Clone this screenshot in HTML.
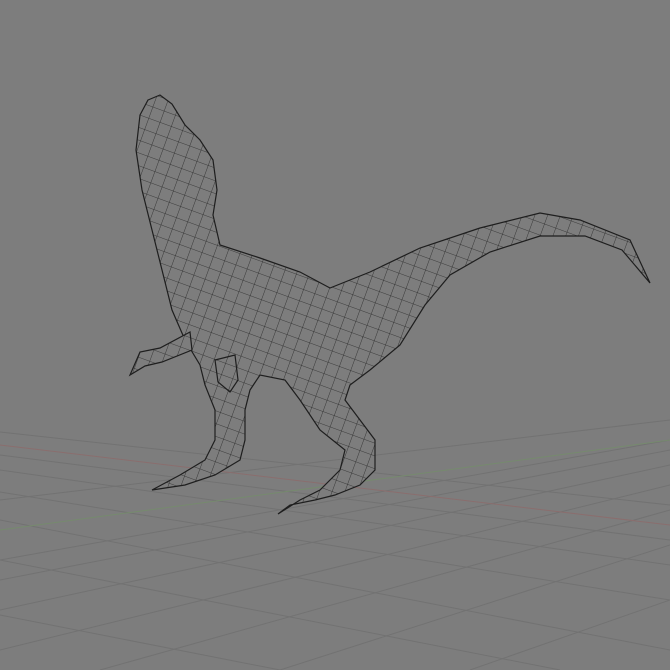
<!DOCTYPE html>
<html><head><style>
html,body{margin:0;padding:0;background:#7d7d7d;width:670px;height:670px;overflow:hidden}
</style></head><body>
<svg width="670" height="670" viewBox="0 0 670 670" xmlns="http://www.w3.org/2000/svg">
<defs>
<pattern id="mesh" width="12" height="12" patternUnits="userSpaceOnUse" patternTransform="rotate(20)">
<rect width="12" height="12" fill="#7d7d7d"/>
<path d="M0 0H12M0 0V12" stroke="#262626" stroke-width="0.8"/>
</pattern>
</defs>
<rect width="670" height="670" fill="#7d7d7d"/>
<g stroke="#727272" stroke-width="1" fill="none">
<line x1="0" y1="455" x2="670" y2="540"/>
<line x1="0" y1="470" x2="670" y2="565"/>
<line x1="0" y1="492" x2="670" y2="600"/>
<line x1="0" y1="520" x2="670" y2="650"/>
<line x1="0" y1="560" x2="560" y2="670"/>
<line x1="0" y1="615" x2="280" y2="670"/>
<line x1="0" y1="432" x2="670" y2="505"/>
<line x1="0" y1="560" x2="670" y2="440"/>
<line x1="0" y1="580" x2="670" y2="450"/>
<line x1="0" y1="610" x2="670" y2="465"/>
<line x1="0" y1="650" x2="670" y2="485"/>
<line x1="100" y1="670" x2="670" y2="510"/>
<line x1="280" y1="670" x2="670" y2="545"/>
<line x1="470" y1="670" x2="670" y2="600"/>
<line x1="0" y1="500" x2="670" y2="420"/>
</g>
<line x1="0" y1="445" x2="670" y2="525" stroke="#8a6e6e" stroke-width="1"/>
<line x1="0" y1="530" x2="670" y2="440" stroke="#768a6e" stroke-width="1"/>
<g fill="url(#mesh)" stroke="#1e1e1e" stroke-width="1.2">
<polygon points="148,100 160,95 172,104 185,125 200,140 213,160 217,190 213,215 220,245 260,258 300,272 330,288 370,272 420,248 480,228 540,213 580,220 630,240 650,283 622,250 585,236 540,236 490,252 450,275 425,305 400,345 370,370 350,385 345,400 360,420 375,440 375,470 360,485 335,495 315,500 290,505 278,514 300,500 320,490 340,470 345,450 320,430 300,400 285,380 260,375 250,390 245,410 245,440 240,460 215,475 185,485 152,490 180,475 205,460 215,440 215,410 205,385 200,365 185,340 172,310 162,270 152,230 142,190 136,150 140,115"/>
<polygon points="190,332 160,348 140,352 130,375 145,366 162,362 192,350"/>
<polygon points="215,360 235,355 238,380 230,392 218,382"/>
</g>
</svg>
</body></html>
